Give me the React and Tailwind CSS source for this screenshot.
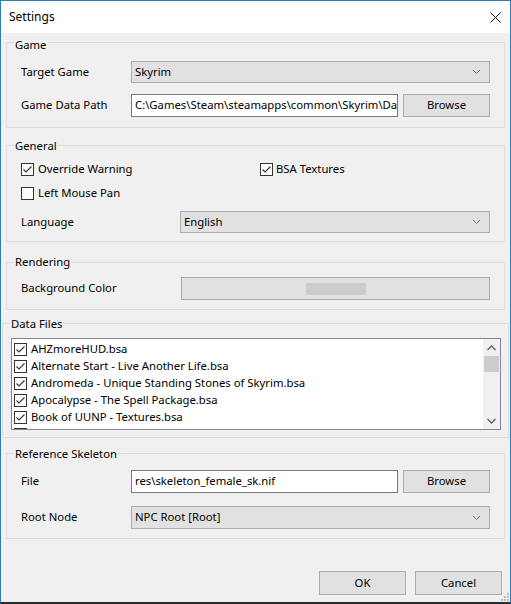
import React from "react";

const font = { fontFamily: '"Noto Sans", "Open Sans", sans-serif' };

function Chevron() {
  return (
    <svg width="9" height="6" viewBox="0 0 9 6" className="shrink-0">
      <polyline points="1,1 4.5,4.5 8,1" fill="none" stroke="#6d6d6d" strokeWidth="1" />
    </svg>
  );
}

function Check({ checked }) {
  return (
    <svg width="13" height="13" viewBox="0 0 13 13" className="shrink-0">
      <rect x="0.5" y="0.5" width="12" height="12" fill="#fff" stroke="#333" />
      {checked && (
        <polyline points="2.5,6.5 5,9 10.5,3.5" fill="none" stroke="#333" strokeWidth="1.1" />
      )}
    </svg>
  );
}

function Combo({ value, className = "" }) {
  return (
    <div className={`flex h-[22px] items-center justify-between border border-[#adadad] bg-[#e1e1e1] pl-[3px] pr-[8px] ${className}`}>
      <span>{value}</span>
      <Chevron />
    </div>
  );
}

function Button({ children, className = "" }) {
  return (
    <div className={`flex h-[23px] w-[87px] items-center justify-center border border-[#adadad] bg-[#e1e1e1] ${className}`}>
      {children}
    </div>
  );
}

function TextBox({ value }) {
  return (
    <div className="flex h-[23px] w-[267px] items-center overflow-hidden whitespace-nowrap border border-[#7a7a7a] bg-white pl-[3px]">
      {value}
    </div>
  );
}

// group box; legend is 22px tall so the frame line sits 11px below the fieldset top
function Group({ title, className = "", legend = "pt-[4px] pb-[2px]", inner = "", children }) {
  return (
    <fieldset className={`border border-[#dcdcdc] ${className}`}>
      <legend className={`ml-[7px] px-[1px] leading-[16px] ${legend}`}>{title}</legend>
      <div className={inner}>{children}</div>
    </fieldset>
  );
}

const files = [
  "AHZmoreHUD.bsa",
  "Alternate Start - Live Another Life.bsa",
  "Andromeda - Unique Standing Stones of Skyrim.bsa",
  "Apocalypse - The Spell Package.bsa",
  "Book of UUNP - Textures.bsa",
  "Bring Out Your Dead.bsa",
];

export default function App() {
  return (
    <div
      style={font}
      className="flex h-[604px] w-[511px] flex-col border-x border-t border-b-2 border-x-[#2f7db3] border-t-[#2f7db3] border-b-[#2b2b2b] bg-[#f0f0f0] text-[11.3px] text-black"
    >
      <div className="flex h-[32px] items-center justify-between bg-white pl-[8px] pr-[9px] text-[12px]">
        <span>Settings</span>
        <svg width="11" height="11" viewBox="0 0 11 11">
          <path d="M0.5 0.5 L10.5 10.5 M10.5 0.5 L0.5 10.5" stroke="#111" strokeWidth="1" />
        </svg>
      </div>

      <div className="relative flex flex-1 flex-col">
        <Group title="Game" className="mx-[5px] -mt-[2px]" legend="pt-[6px]" inner="px-[14px] pb-[10px]">
          <div className="mt-[8px] flex items-center">
            <span className="w-[110px]">Target Game</span>
            <Combo value="Skyrim" className="flex-1" />
          </div>
          <div className="mt-[11px] flex items-center">
            <span className="w-[110px]">Game Data Path</span>
            <TextBox value="C:\Games\Steam\steamapps\common\Skyrim\Data" />
            <Button className="ml-[5px]">Browse</Button>
          </div>
        </Group>

        <Group title="General" className="mx-[5px] mt-[6px]" inner="px-[14px] pb-[8px]">
          <div className="mt-[5px] flex h-[16px] items-center">
            <label className="flex w-[239px] items-center gap-[4px]">
              <Check checked />
              <span>Override Warning</span>
            </label>
            <label className="flex items-center gap-[3px]">
              <Check checked />
              <span>BSA Textures</span>
            </label>
          </div>
          <div className="mt-[8px] flex h-[16px] items-center">
            <label className="flex items-center gap-[4px]">
              <Check />
              <span>Left Mouse Pan</span>
            </label>
          </div>
          <div className="mt-[10px] flex items-center">
            <span className="w-[159px]">Language</span>
            <Combo value="English" className="flex-1" />
          </div>
        </Group>

        <Group title="Rendering" className="mx-[5px] mt-[9px]" legend="pt-[3px] pb-[3px]" inner="px-[14px] pb-[9px]">
          <div className="mt-[4px] flex items-center">
            <span className="w-[160px]">Background Color</span>
            <div className="flex h-[23px] flex-1 items-center justify-center border border-[#adadad] bg-[#e1e1e1]">
              <div className="h-[12px] w-[60px] bg-[#cccccc]" />
            </div>
          </div>
        </Group>

        <Group title="Data Files" className="mx-[1px] mt-[2px]" inner="pl-[8px] pr-[7px] pb-[7px]">
          <div className="mt-[4px] flex h-[92px] border border-[#828790] bg-white">
            <div className="flex-1 overflow-hidden pl-[2px] pt-[2px]">
              {files.map((f) => (
                <div key={f} className="flex h-[17px] items-center gap-[4px] whitespace-nowrap">
                  <Check checked />
                  <span>{f}</span>
                </div>
              ))}
            </div>
            <div className="flex w-[17px] flex-col items-center bg-[#f0f0f0]">
              <div className="flex h-[17px] items-center justify-center">
                <svg width="9" height="6" viewBox="0 0 9 6">
                  <polyline points="0.5,5 4.5,1 8.5,5" fill="none" stroke="#606060" strokeWidth="1.4" />
                </svg>
              </div>
              <div className="h-[16px] w-[15px] bg-[#cdcdcd]" />
              <div className="flex-1" />
              <div className="flex h-[17px] items-center justify-center">
                <svg width="9" height="6" viewBox="0 0 9 6">
                  <polyline points="0.5,1 4.5,5 8.5,1" fill="none" stroke="#606060" strokeWidth="1.4" />
                </svg>
              </div>
            </div>
          </div>
        </Group>

        <Group title="Reference Skeleton" className="mx-[5px] mt-[4px]" inner="px-[14px] pb-[9px]">
          <div className="mt-[6px] flex items-center">
            <span className="w-[110px]">File</span>
            <TextBox value="res\skeleton_female_sk.nif" />
            <Button className="ml-[5px]">Browse</Button>
          </div>
          <div className="mt-[13px] flex items-center">
            <span className="w-[110px]">Root Node</span>
            <Combo value="NPC Root [Root]" className="h-[23px] flex-1" />
          </div>
        </Group>

        <div className="mt-auto mb-[7px] mr-[8px] flex justify-end gap-[9px]">
          <Button className="h-[24px]">OK</Button>
          <Button className="h-[24px]">Cancel</Button>
        </div>

        <svg width="10" height="10" viewBox="0 0 10 10" className="absolute bottom-0 right-0">
          <rect x="7" y="1" width="2" height="2" fill="#bcbcbc" />
          <rect x="4" y="4" width="2" height="2" fill="#bcbcbc" />
          <rect x="7" y="4" width="2" height="2" fill="#bcbcbc" />
          <rect x="1" y="7" width="2" height="2" fill="#bcbcbc" />
          <rect x="4" y="7" width="2" height="2" fill="#bcbcbc" />
          <rect x="7" y="7" width="2" height="2" fill="#bcbcbc" />
        </svg>
      </div>
    </div>
  );
}
